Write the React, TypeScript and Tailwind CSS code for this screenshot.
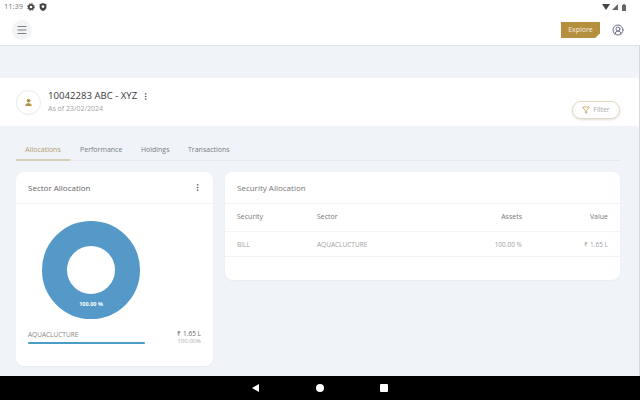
import { Menu, CircleUserRound, Filter, EllipsisVertical, User } from "lucide-react";

const font = { fontFamily: '"Open Sans", sans-serif' };

export default function App() {
  const tabs = ["Allocations", "Performance", "Holdings", "Transactions"];

  return (
    <div className="w-[640px] h-[400px] flex flex-col overflow-hidden bg-[#f0f4f9]" style={font}>
      {/* Status bar + app bar */}
      <header className="h-[46px] shrink-0 bg-white border-b border-[#dfe3e8]">
        <div className="h-[14px] flex items-center justify-between pl-[4px] pr-[14px]">
          <div className="flex items-center">
            <span className="text-[7.5px] text-[#777] w-[23px]">11:39</span>
            <svg width="8" height="8" viewBox="0 0 8 8">
              <circle cx="4" cy="4" r="2.2" fill="none" stroke="#444" strokeWidth="1.7" />
              <circle cx="4" cy="4" r="3.4" fill="none" stroke="#444" strokeWidth="1" strokeDasharray="1.4 1.27" />
            </svg>
            <svg width="8" height="8" viewBox="0 0 8 8" className="ml-[4px]">
              <path d="M4 0 L7.4 1.2 V4 C7.4 6 5.8 7.4 4 8 C2.2 7.4 .6 6 .6 4 V1.2 Z" fill="#444" />
              <circle cx="4" cy="3.6" r="1.3" fill="#fff" />
            </svg>
          </div>
          <div className="flex items-center gap-[1px]">
            <svg width="8" height="6" viewBox="0 0 8 6">
              <path d="M0 0 H8 L4 6 Z" fill="#444" />
            </svg>
            <svg width="6" height="6" viewBox="0 0 6 6" className="ml-[1px]">
              <path d="M6 0 V6 H0 Z" fill="#666" />
            </svg>
            <svg width="4" height="7" viewBox="0 0 4 7" className="ml-[3px]">
              <path d="M1.2 0 H2.8 V1 H4 V7 H0 V1 H1.2 Z" fill="#666" />
            </svg>
          </div>
        </div>
        <div className="h-[32px] flex items-center justify-between pl-[12px] pr-[16px]">
          <div className="w-[20px] h-[20px] rounded-full bg-[#f3f4f5] flex items-center justify-center">
            <Menu size={12} className="text-[#7a7f86]" />
          </div>
          <div className="flex items-center gap-[12px]">
            <div className="w-[39px] h-[16px] bg-[#b58e3e] text-[#f5efe0] text-[7px] font-medium flex items-center justify-center [clip-path:polygon(0_0,100%_0,100%_70%,88%_100%,0_100%)]">
              Explore
            </div>
            <CircleUserRound size={12} className="text-[#6b7288]" />
          </div>
        </div>
      </header>

      <div className="flex-1 min-h-0 flex flex-col pt-[32px] border-r border-[#d5d9de]">
        {/* Account strip */}
        <section className="h-[48px] shrink-0 bg-white flex pl-[16px] pr-[19px]">
          <div className="w-[25px] h-[25px] mt-[12px] rounded-full bg-white border border-[#e8e8e8] flex items-center justify-center">
            <User size={9} className="text-[#b58e3e] fill-[#b58e3e]" />
          </div>
          <div className="ml-[7px] mt-[11px]">
            <div className="flex items-center gap-[4px]">
              <span className="text-[9.6px] leading-[14px] text-[#3a3a3a]">10042283 ABC - XYZ</span>
              <EllipsisVertical size={9} className="text-[#555]" />
            </div>
            <div className="text-[7px] leading-[12px] text-[#a3a3a3]">As of 23/02/2024</div>
          </div>
          <div className="ml-auto mt-[23px] w-[48px] h-[18px] rounded-full bg-white border border-[#e5d9c3] flex items-center justify-center gap-[3px] shadow-sm">
            <Filter size={8} className="text-[#b58e3e]" />
            <span className="text-[7px] text-[#aaa]">Filter</span>
          </div>
        </section>

        {/* Tabs */}
        <nav className="mt-[15px] ml-[16px] mr-[19px] h-[20px] flex items-start border-b border-[#e6eaee] shrink-0">
          {tabs.map((tab, i) => (
            <div
              key={tab}
              className={
                i === 0
                  ? "h-[20px] w-[54px] -mb-px pt-[2px] text-center text-[7px] leading-[14px] text-[#b09a68] border-b-2 border-[#d9cdb8]"
                  : "h-[20px] pl-[10px] pr-[8.5px] pt-[2px] text-[7px] leading-[14px] text-[#777c82]"
              }
            >
              {tab}
            </div>
          ))}
        </nav>

        {/* Cards */}
        <div className="mt-[11px] pl-[16px] pr-[19px] flex items-start gap-[12px]">
          <section className="w-[197px] h-[194px] shrink-0 bg-white rounded-[8px] shadow-[0_1px_2px_rgba(0,0,0,0.04)]">
            <div className="h-[32px] border-b border-[#f0f2f4] pl-[12px] pr-[11px] flex items-center justify-between">
              <h2 className="text-[8px] text-[#666]">Sector Allocation</h2>
              <EllipsisVertical size={9} className="text-[#555]" />
            </div>
            <div className="pl-[26px] mt-[17px]">
              <svg width="98" height="98" viewBox="0 0 98 98" className="block">
                <circle cx="49" cy="49" r="36.5" fill="none" stroke="#5499c7" strokeWidth="25" />
                <text x="49" y="85" textAnchor="middle" fontSize="5.5" fontWeight="700" fill="#fff" fontFamily="Open Sans">
                  100.00 %
                </text>
              </svg>
            </div>
            <div className="mt-[10px] px-[12px] flex justify-between">
              <div className="w-[117px]">
                <div className="text-[6.5px] leading-[9px] text-[#888] mt-[1px]">AQUACLUCTURE</div>
                <div className="mt-[3px] h-[2px] rounded-full bg-[#4a9cc9]" />
              </div>
              <div className="text-right">
                <div className="text-[6.5px] leading-[9px] text-[#666]">₹ 1.65 L</div>
                <div className="text-[6px] leading-[7px] text-[#aaa]">100.00%</div>
              </div>
            </div>
          </section>

          <section className="flex-1 h-[108px] bg-white rounded-[8px] shadow-[0_1px_2px_rgba(0,0,0,0.04)]">
            <div className="h-[32px] border-b border-[#f0f2f4] px-[12px] flex items-center">
              <h2 className="text-[8px] text-[#777]">Security Allocation</h2>
            </div>
            <div className="h-[28px] border-b border-[#f4f5f7] px-[12px] grid grid-cols-[80px_1fr_80px_86px] items-center text-[7px] text-[#777]">
              <span>Security</span>
              <span>Sector</span>
              <span className="text-right">Assets</span>
              <span className="text-right">Value</span>
            </div>
            <div className="h-[25px] border-b border-[#f0f2f4] px-[12px] pt-[1px] grid grid-cols-[80px_1fr_80px_86px] items-center text-[6.5px] text-[#a0a0a0]">
              <span>BILL</span>
              <span>AQUACLUCTURE</span>
              <span className="text-right">100.00 %</span>
              <span className="text-right">₹ 1.65 L</span>
            </div>
          </section>
        </div>
      </div>

      {/* Android nav bar */}
      <footer className="h-[24px] shrink-0 bg-black flex items-center">
        <div className="ml-[252px] w-0 h-0 border-y-[4px] border-y-transparent border-r-[7px] border-r-white" />
        <div className="ml-[57px] w-[8px] h-[8px] rounded-full bg-white" />
        <div className="ml-[56px] w-[8px] h-[8px] rounded-[1px] bg-white" />
      </footer>
    </div>
  );
}
